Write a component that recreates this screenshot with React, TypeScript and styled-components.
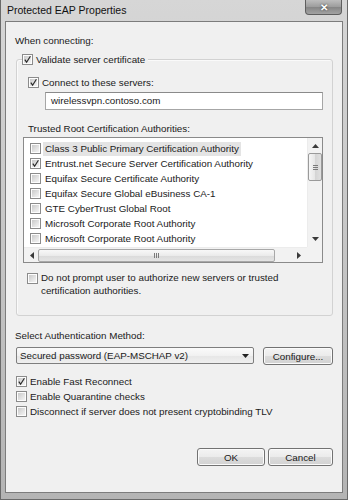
import styled, { createGlobalStyle } from "styled-components";

const GlobalStyle = createGlobalStyle`
  html, body {
    margin: 0;
    padding: 0;
    background: #c4c4c4;
  }
  * {
    box-sizing: border-box;
  }
`;

const Window = styled.div`
  width: 348px;
  height: 500px;
  display: flex;
  flex-direction: column;
  padding: 0 4px 6px 4px;
  border: 1px solid #6a6a6a;
  border-top: none;
  background: linear-gradient(180deg, #d6d6d6 0%, #c9c9c9 40%, #b4b4b4 100%);
  font-family: "Liberation Sans", Arial, sans-serif;
  color: #1a1a1a;
`;

const TitleBar = styled.div`
  height: 21px;
  display: flex;
  justify-content: space-between;
  align-items: flex-start;
  padding-right: 1px;
`;

const Title = styled.div`
  font-size: 10.5px;
  line-height: 21px;
  padding-left: 2px;
  color: #111;
`;

const CloseButton = styled.div`
  width: 37px;
  height: 15px;
  border: 1px solid #5e5e5e;
  border-top: none;
  border-radius: 0 0 4px 4px;
  background: linear-gradient(180deg, #bdbdbd 0%, #9c9c9c 50%, #858585 51%, #a2a2a2 100%);
  color: #fff;
  font-size: 10px;
  font-weight: bold;
  display: flex;
  align-items: center;
  justify-content: center;
  text-shadow: 0 0 2px #333;
`;

const Client = styled.div`
  flex: 1;
  display: flex;
  flex-direction: column;
  background: #f0f0f0;
  border: 1px solid #7c7c7c;
  padding: 12px 9px 0 9px;
  font-size: 9.8px;
`;

const Label = styled.div<{ $top?: number }>`
  line-height: 14px;
  margin-top: ${(p) => p.$top ?? 0}px;
  white-space: nowrap;
`;

const Group = styled.fieldset`
  margin: 4px 0 0 1px;
  padding: 0 9px 18px 11px;
  min-inline-size: 0;
  border: 1px solid #d2d2d2;
  border-radius: 3px;
  box-shadow: inset 1px 1px 0 #fafafa;
`;

const Legend = styled.legend`
  padding: 0 3px 0 0;
  margin-left: -6px;
  background: #f0f0f0;
`;

const CheckRow = styled.label<{ $top?: number; $height?: number }>`
  display: flex;
  align-items: center;
  gap: 3px;
  height: ${(p) => p.$height ?? 14}px;
  margin-top: ${(p) => p.$top ?? 0}px;
  white-space: nowrap;
`;

const BoxOuter = styled.span`
  width: 11px;
  height: 11px;
  flex: none;
  border: 1px solid #8b8b8b;
  background: #fdfdfd;
  display: flex;
  align-items: center;
  justify-content: center;
  position: relative;
`;

const BoxInner = styled.span`
  width: 7px;
  height: 7px;
  background: linear-gradient(135deg, #c9c9c9 0%, #e4e4e4 60%, #f4f4f4 100%);
`;

const Tick = styled.svg`
  position: absolute;
  left: 0;
  top: 0;
`;

function CheckBox({ checked }: { checked?: boolean }) {
  return (
    <BoxOuter>
      <BoxInner />
      {checked ? (
        <Tick width="9" height="9" viewBox="0 0 9 9">
          <path d="M1.8 4.6 L3.6 7.2 L7.4 1.2" fill="none" stroke="#2a2a2a" strokeWidth="1.2" />
        </Tick>
      ) : null}
    </BoxOuter>
  );
}

const ServerInput = styled.div`
  height: 18px;
  margin: 3px 0 0 17px;
  border: 1px solid #a6a6a6;
  border-top-color: #8a8a8a;
  background: #fff;
  padding-left: 5px;
  line-height: 16px;
`;

const ListBox = styled.div`
  margin: 1px 0 0 -5px;
  height: 126px;
  border: 1px solid #8a8a8a;
  background: #fff;
  display: grid;
  grid-template-columns: 1fr 15px;
  grid-template-rows: 109px 15px;
`;

const ListRows = styled.div`
  overflow: hidden;
  padding: 3px 0 0 6px;
`;

const ListRow = styled.div`
  height: 15px;
  display: flex;
  align-items: center;
  gap: 2px;
  white-space: nowrap;
`;

const ItemText = styled.span<{ $selected?: boolean }>`
  padding: 0 2px;
  line-height: 14px;
  background: ${(p) => (p.$selected ? "#e4e4e4" : "transparent")};
`;

const VScroll = styled.div`
  background: #f2f2f2;
  border-left: 1px solid #ececec;
  display: flex;
  flex-direction: column;
  align-items: center;
  padding-top: 6px;
`;

const HScroll = styled.div`
  background: #f2f2f2;
  border-top: 1px solid #ececec;
  display: flex;
  align-items: center;
  padding-left: 6px;
`;

const Corner = styled.div`
  background: #f2f2f2;
`;

const ThumbV = styled.div`
  width: 14px;
  height: 28px;
  margin-top: 5px;
  border: 1px solid #9a9a9a;
  border-radius: 2px;
  background: linear-gradient(90deg, #f6f6f6 0%, #e6e6e6 50%, #d4d4d4 51%, #e0e0e0 100%);
  display: flex;
  flex-direction: column;
  align-items: center;
  justify-content: center;
  gap: 1px;
`;

const GripH = styled.span`
  width: 5px;
  height: 1px;
  background: #7a7a7a;
`;

const ThumbH = styled.div`
  width: 237px;
  height: 13px;
  margin-left: 4px;
  border: 1px solid #a8a8a8;
  border-radius: 2px;
  background: linear-gradient(180deg, #f8f8f8 0%, #ebebeb 50%, #dadada 51%, #e4e4e4 100%);
  display: flex;
  align-items: center;
  justify-content: center;
  gap: 1px;
`;

const GripV = styled.span`
  width: 1px;
  height: 5px;
  background: #7a7a7a;
`;

const Arrow = styled.svg`
  flex: none;
`;

const Spacer = styled.div`
  flex: 1;
`;

const PromptRow = styled.label`
  display: flex;
  align-items: flex-start;
  gap: 3px;
  margin: 9px 0 0 -1px;
  line-height: 12.6px;
`;

const PromptBox = styled.span`
  margin-top: 1px;
`;

const MethodRow = styled.div`
  display: flex;
  align-items: flex-start;
  gap: 9px;
  margin: 4px 0 0 1px;
`;

const Combo = styled.div`
  width: 238px;
  height: 17px;
  border: 1px solid #7e7e7e;
  border-radius: 2px;
  background: linear-gradient(180deg, #fbfbfb 0%, #f1f1f1 50%, #e6e6e6 51%, #efefef 100%);
  display: flex;
  align-items: center;
  justify-content: space-between;
  padding: 0 4px 0 3px;
`;

const Button = styled.div<{ $width: number }>`
  width: ${(p) => p.$width}px;
  height: 18px;
  border: 1px solid #727272;
  border-radius: 3px;
  background: linear-gradient(180deg, #f4f4f4 0%, #ebebeb 50%, #dcdcdc 51%, #d2d2d2 100%);
  box-shadow: inset 0 0 0 1px #fbfbfb;
  display: flex;
  align-items: center;
  justify-content: center;
`;

const OptionList = styled.div`
  margin: 9px 0 0 1px;
  display: flex;
  flex-direction: column;
`;

const Footer = styled.div`
  display: flex;
  justify-content: flex-end;
  gap: 3px;
  margin-top: 29px;
`;

const certs = [
  { name: "Class 3 Public Primary Certification Authority", checked: false, selected: true },
  { name: "Entrust.net Secure Server Certification Authority", checked: true },
  { name: "Equifax Secure Certificate Authority", checked: false },
  { name: "Equifax Secure Global eBusiness CA-1", checked: false },
  { name: "GTE CyberTrust Global Root", checked: false },
  { name: "Microsoft Corporate Root Authority", checked: false },
  { name: "Microsoft Corporate Root Authority", checked: false },
];

const options = [
  { label: "Enable Fast Reconnect", checked: true },
  { label: "Enable Quarantine checks", checked: false },
  { label: "Disconnect if server does not present cryptobinding TLV", checked: false },
];

function App() {
  return (
    <>
      <GlobalStyle />
      <Window>
        <TitleBar>
          <Title>Protected EAP Properties</Title>
          <CloseButton>✕</CloseButton>
        </TitleBar>
        <Client>
          <Label>When connecting:</Label>
          <Group>
            <Legend>
              <CheckRow>
                <CheckBox checked />
                Validate server certificate
              </CheckRow>
            </Legend>
            <CheckRow $top={9}>
              <CheckBox checked />
              Connect to these servers:
            </CheckRow>
            <ServerInput>wirelessvpn.contoso.com</ServerInput>
            <Label $top={12}>Trusted Root Certification Authorities:</Label>
            <ListBox>
              <ListRows>
                {certs.map((c, i) => (
                  <ListRow key={i}>
                    <CheckBox checked={c.checked} />
                    <ItemText $selected={c.selected}>{c.name}</ItemText>
                  </ListRow>
                ))}
              </ListRows>
              <VScroll>
                <Arrow width="7" height="4" viewBox="0 0 7 4">
                  <path d="M0 4 L3.5 0 L7 4 Z" fill="#3a3a3a" />
                </Arrow>
                <ThumbV>
                  <GripH />
                  <GripH />
                  <GripH />
                </ThumbV>
                <Spacer />
                <Arrow width="7" height="4" viewBox="0 0 7 4" style={{ marginBottom: 6 }}>
                  <path d="M0 0 L3.5 4 L7 0 Z" fill="#3a3a3a" />
                </Arrow>
              </VScroll>
              <HScroll>
                <Arrow width="4" height="7" viewBox="0 0 4 7">
                  <path d="M4 0 L0 3.5 L4 7 Z" fill="#3a3a3a" />
                </Arrow>
                <ThumbH>
                  <GripV />
                  <GripV />
                  <GripV />
                </ThumbH>
                <Spacer />
                <Arrow width="4" height="7" viewBox="0 0 4 7" style={{ marginRight: 6 }}>
                  <path d="M0 0 L4 3.5 L0 7 Z" fill="#3a3a3a" />
                </Arrow>
              </HScroll>
              <Corner />
            </ListBox>
            <PromptRow>
              <PromptBox>
                <CheckBox />
              </PromptBox>
              <span>
                Do not prompt user to authorize new servers or trusted
                <br />
                certification authorities.
              </span>
            </PromptRow>
          </Group>
          <Label $top={13}>Select Authentication Method:</Label>
          <MethodRow>
            <Combo>
              <span>Secured password (EAP-MSCHAP v2)</span>
              <svg width="7" height="4" viewBox="0 0 7 4">
                <path d="M0 0 L3.5 4 L7 0 Z" fill="#222" />
              </svg>
            </Combo>
            <Button $width={70}>Configure...</Button>
          </MethodRow>
          <OptionList>
            {options.map((o) => (
              <CheckRow key={o.label} $height={15}>
                <CheckBox checked={o.checked} />
                {o.label}
              </CheckRow>
            ))}
          </OptionList>
          <Footer>
            <Button $width={68}>OK</Button>
            <Button $width={65}>Cancel</Button>
          </Footer>
        </Client>
      </Window>
    </>
  );
}

export default App;
